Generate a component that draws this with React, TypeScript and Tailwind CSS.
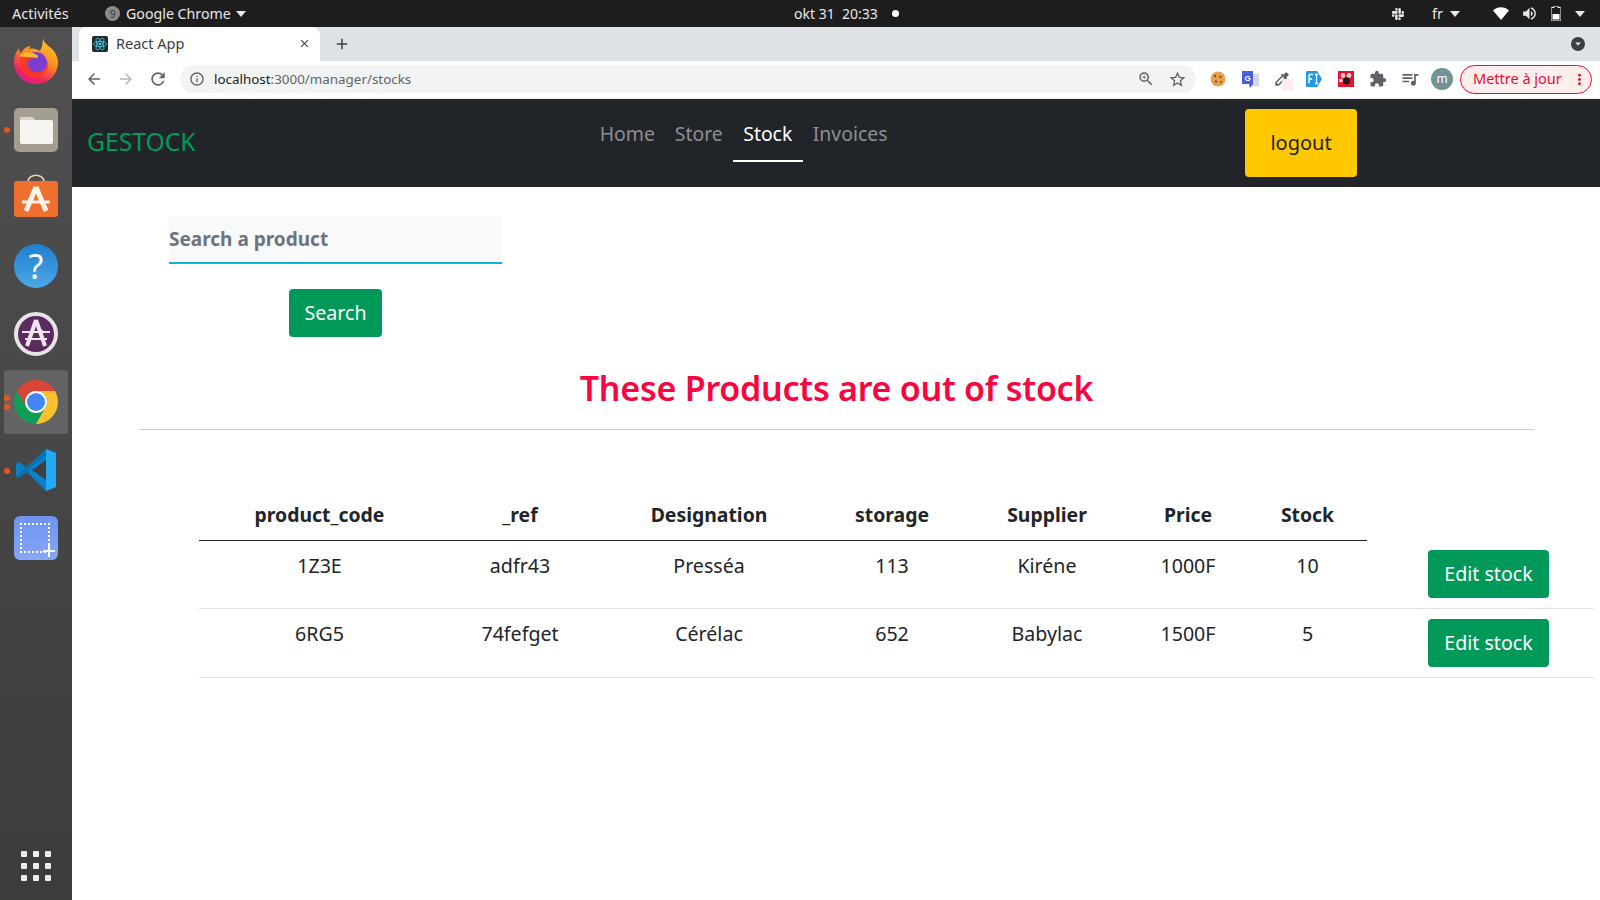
import React from 'react';
import {
  MdArrowBack,
  MdArrowForward,
  MdRefresh,
  MdInfoOutline,
  MdZoomIn,
  MdStarBorder,
  MdExtension,
  MdQueueMusic,
  MdAdd,
  MdClose,
  MdMoreVert,
  MdVolumeUp,
  MdColorize,
} from 'react-icons/md';
import { FaSlack } from 'react-icons/fa';

const products = [
  { code: '1Z3E', ref: 'adfr43', designation: 'Presséa', storage: '113', supplier: 'Kiréne', price: '1000F', stock: '10' },
  { code: '6RG5', ref: '74fefget', designation: 'Cérélac', storage: '652', supplier: 'Babylac', price: '1500F', stock: '5' },
];

const Caret = ({ className = '' }: { className?: string }) => (
  <svg viewBox="0 0 10 6" className={`h-[6px] w-[10px] ${className}`}>
    <path d="M0 0h10L5 6z" fill="currentColor" />
  </svg>
);

const Firefox = () => (
  <svg viewBox="0 0 46 48" className="mb-[3px] h-[48px] w-[46px]">
    <defs>
      <linearGradient id="ffBody" x1="0.8" y1="0" x2="0.3" y2="1">
        <stop offset="0" stopColor="#ffcf2e" />
        <stop offset="0.45" stopColor="#ff8a1f" />
        <stop offset="0.8" stopColor="#f0265e" />
        <stop offset="1" stopColor="#d81b8c" />
      </linearGradient>
    </defs>
    <path d="M30 1c1 6 5 7 9 11 3 3 6 8 6 13 0 13-10 22-22 22S1 38 1 25c0-6 2-10 5-14 0 3 1 4 2 5 2-4 6-7 10-7-1 1-2 2-2 3 3-1 8 0 11 2 2-4 3-8 3-13z" fill="url(#ffBody)" />
    <circle cx="23" cy="26" r="11" fill="#7b3fd0" />
    <path d="M7 20c5-3 12-3 16 1-4 0-7 1-8 4-1 5 3 10 9 10 7 0 11-5 10-12 3 7-1 18-12 18C12 41 5 31 7 20z" fill="#f8391f" opacity="0.85" />
    <path d="M6 19c4-4 10-5 16-2 3 1 4 3 2 4-5-1-11 0-18-2z" fill="#ffb62e" />
  </svg>
);

const Files = () => (
  <div className="flex h-[44px] w-[44px] items-center justify-center rounded-[5px] bg-[#a39e8f]">
    <svg viewBox="0 0 33 27" className="h-[27px] w-[33px]">
      <path d="M2 0h10l3 3h16a2 2 0 0 1 2 2v20a2 2 0 0 1-2 2H2a2 2 0 0 1-2-2V2a2 2 0 0 1 2-2z" fill="#f6f4f1" />
      <path d="M0 2a2 2 0 0 1 2-2h10l3 3H0z" fill="#d9d5cd" />
    </svg>
  </div>
);

const Software = () => (
  <svg viewBox="0 0 44 46" className="mb-[4px] h-[46px] w-[44px]">
    <path d="M14 9C14 0 30 0 30 9" fill="none" stroke="#edd5ab" strokeWidth="1.6" />
    <rect x="0" y="8" width="44" height="36" rx="3" fill="#ef6f2e" />
    <path d="M22 14L12 38M22 14l10 24" stroke="#fff3e8" strokeWidth="5" fill="none" />
    <path d="M8 29h28" stroke="#fff3e8" strokeWidth="3" />
  </svg>
);

const Help = () => (
  <div className="flex h-[44px] w-[44px] items-center justify-center rounded-full bg-linear-to-b from-[#1f7fd0] to-[#4aa8e6] text-[34px] leading-none text-white">
    ?
  </div>
);

const Updater = () => (
  <svg viewBox="0 0 44 44" className="h-[44px] w-[44px]">
    <circle cx="22" cy="22" r="20" fill="#5b2a5e" stroke="#e8e4e6" strokeWidth="4" />
    <path d="M22 8L13 34M22 8l9 26" stroke="#efe6ee" strokeWidth="4" fill="none" />
    <path d="M8 20h28M11 27h22" stroke="#efe6ee" strokeWidth="2" />
    <circle cx="27" cy="20" r="2.5" fill="#efe6ee" />
  </svg>
);

const Chrome = () => (
  <svg viewBox="0 0 44 44" className="h-[44px] w-[44px]">
    <path d="M22 11H41A22 22 0 0 0 3 11L12.5 27.5A11 11 0 0 1 22 11z" fill="#db4437" />
    <path d="M12.5 27.5L3 11A22 22 0 0 0 22 44L31.5 27.5A11 11 0 0 1 12.5 27.5z" fill="#0f9d58" />
    <path d="M31.5 27.5L22 44A22 22 0 0 0 41 11H22A11 11 0 0 1 31.5 27.5z" fill="#fbc02d" />
    <circle cx="22" cy="22" r="11" fill="#fff" />
    <circle cx="22" cy="22" r="9" fill="#4285f4" />
  </svg>
);

const VsCode = () => (
  <svg viewBox="0 0 42 44" className="h-[44px] w-[42px]">
    <path d="M31 1L12 20 4 14 1 16v12l3 2 8-6 19 19 10-4V5z" fill="#0a80cc" />
    <path d="M31 1l10 4v34l-10 4z" fill="#23a9f2" />
    <path d="M31 12v20L17 22z" fill="#3f3f3f" />
    <path d="M1 28l3 2 27-23V1z" fill="#0b6fb3" />
  </svg>
);

const Screenshot = () => (
  <div className="relative flex h-[44px] w-[44px] items-center justify-center rounded-[6px] bg-linear-to-b from-[#6f93ee] to-[#86a6f7]">
    <div className="mr-[2px] h-[30px] w-[30px] border-[2px] border-dotted border-white" />
    <svg viewBox="0 0 12 12" className="absolute right-[3px] bottom-[3px] h-[12px] w-[12px]">
      <path d="M5 0h2v5h5v2H7v5H5V7H0V5h5z" fill="#fff" />
    </svg>
  </div>
);

const ReactFavicon = () => (
  <svg viewBox="0 0 16 16" className="h-[16px] w-[16px] rounded-[2px] bg-[#1f2a30]">
    <g fill="none" stroke="#4fc9dc" strokeWidth="0.8">
      <ellipse cx="8" cy="8" rx="6.5" ry="2.6" />
      <ellipse cx="8" cy="8" rx="6.5" ry="2.6" transform="rotate(60 8 8)" />
      <ellipse cx="8" cy="8" rx="6.5" ry="2.6" transform="rotate(120 8 8)" />
    </g>
    <circle cx="8" cy="8" r="1.4" fill="#4fc9dc" />
  </svg>
);

const DockDot = ({ className }: { className: string }) => (
  <span className={`absolute left-[4px] h-[6px] w-[6px] rounded-full bg-[#e95420] ${className}`} />
);

const dockItem = 'relative flex h-[68px] w-full shrink-0 items-center justify-center';

const Dock = () => (
  <aside className="flex w-[72px] shrink-0 flex-col items-center bg-linear-to-b from-[#505050] to-[#3c3c3c] pt-[1px] pb-[19px]">
    <div className={dockItem}><Firefox /></div>
    <div className={dockItem}>
      <DockDot className="top-[31px]" />
      <Files />
    </div>
    <div className={dockItem}><Software /></div>
    <div className={dockItem}><Help /></div>
    <div className={dockItem}><Updater /></div>
    <div className={dockItem}>
      <div className="absolute inset-x-[4px] inset-y-[2px] rounded-[3px] bg-[#636363]" />
      <DockDot className="top-[27px]" />
      <DockDot className="top-[36px]" />
      <div className="relative"><Chrome /></div>
    </div>
    <div className={dockItem}>
      <DockDot className="top-[32px]" />
      <VsCode />
    </div>
    <div className={dockItem}><Screenshot /></div>
    <div className="mt-auto grid grid-cols-3 gap-[6px]">
      {Array.from({ length: 9 }).map((_, i) => (
        <span key={i} className="h-[6px] w-[6px] rounded-[1px] bg-[#eeeeee]" />
      ))}
    </div>
  </aside>
);

const TopBar = () => (
  <header className="relative flex h-[27px] shrink-0 items-center bg-[#1d1d1d] text-[14.5px] text-[#e8e8e8]">
    <span className="ml-[12px] w-[58px]">Activités</span>
    <span className="ml-[35px] flex h-[15px] w-[15px] items-center justify-center rounded-full bg-[#8a8a8a] text-[10px] leading-none text-[#333]">9</span>
    <span className="ml-[6px] text-[14.2px]">Google Chrome</span>
    <Caret className="ml-[5px]" />
    <div className="absolute left-[794px] flex items-center text-[14px]">
      <span>okt 31&nbsp;&nbsp;20:33</span>
      <span className="ml-[14px] h-[7px] w-[7px] rounded-full bg-white" />
    </div>
    <div className="ml-auto flex items-center pr-[15px]">
      <FaSlack className="mr-[27px] h-[14px] w-[14px]" />
      <span className="mr-[7px]">fr</span>
      <Caret className="mr-[33px]" />
      <svg viewBox="0 0 16 13" className="mr-[12px] h-[13px] w-[16px]">
        <path d="M0 3.5C4-1 12-1 16 3.5L8 13z" fill="#fff" />
      </svg>
      <MdVolumeUp className="mr-[13px] h-[17px] w-[17px]" />
      <svg viewBox="0 0 10 15" className="mr-[14px] h-[15px] w-[10px]">
        <path d="M3 0h4v1.5h2a1 1 0 0 1 1 1V14a1 1 0 0 1-1 1H1a1 1 0 0 1-1-1V2.5a1 1 0 0 1 1-1h2z" fill="none" stroke="#fff" strokeWidth="1" />
        <rect x="1.5" y="8" width="7" height="5.5" fill="#fff" />
      </svg>
      <Caret />
    </div>
  </header>
);

const extensionIcons = [
  <svg viewBox="0 0 16 16" className="h-[16px] w-[16px]">
    <circle cx="8" cy="8" r="7.5" fill="#e9a24c" />
    <circle cx="5" cy="5" r="1.2" fill="#8a4a1c" />
    <circle cx="10.5" cy="6" r="1.2" fill="#8a4a1c" />
    <circle cx="6" cy="10.5" r="1.2" fill="#8a4a1c" />
    <circle cx="11" cy="11" r="1" fill="#8a4a1c" />
  </svg>,
  <svg viewBox="0 0 17 17" className="h-[17px] w-[17px]">
    <rect x="7" y="3" width="10" height="12" fill="#d5d8dc" />
    <path d="M0 0h11v13l-3 4-1-4H0z" fill="#4a5fe0" />
    <text x="2.5" y="9.5" fontSize="8" fontWeight="700" fill="#fff" fontFamily="Liberation Sans, sans-serif">G</text>
  </svg>,
  <div className="relative flex h-[18px] w-[18px] items-center justify-center">
    <MdColorize className="h-[18px] w-[18px] text-[#5f6368]" />
    <span className="absolute right-[-3px] bottom-[-3px] h-[12px] w-[12px] rounded-[2px] bg-[#fdeef2]" />
  </div>,
  <svg viewBox="0 0 16 16" className="h-[16px] w-[16px]">
    <path d="M1 0h10l5 8-5 8H1a1 1 0 0 1-1-1V1a1 1 0 0 1 1-1z" fill="#1f9be6" />
    <path d="M3 3.5h4M3 3.5v9M3 8h3M9 3.5h3M10.5 3.5v9M9 12.5h3" stroke="#fff" strokeWidth="1.3" fill="none" />
  </svg>,
  <svg viewBox="0 0 16 16" className="h-[16px] w-[16px]">
    <rect width="16" height="16" fill="#e3122f" />
    <circle cx="5" cy="4.5" r="2.4" fill="#f7c9cf" />
    <circle cx="11" cy="4.5" r="2.4" fill="#f7c9cf" />
    <circle cx="3" cy="9.5" r="2" fill="#f7c9cf" />
    <circle cx="8.5" cy="10" r="3.4" fill="#26181a" />
  </svg>,
  <MdExtension className="h-[18px] w-[18px] text-[#5f6368]" />,
  <MdQueueMusic className="h-[20px] w-[20px] text-[#5f6368]" />,
];

const Browser = () => (
  <>
    <div className="flex h-[34px] shrink-0 items-end bg-[#dee1e6]">
      <div className="ml-[7px] flex h-[34px] w-[241px] items-center rounded-t-[8px] bg-white pr-[9px] pb-[1px] pl-[13px]">
        <ReactFavicon />
        <span className="ml-[8px] text-[14.5px] text-[#3c4043]">React App</span>
        <MdClose className="ml-auto h-[13px] w-[13px] text-[#3c4043]" />
      </div>
      <MdAdd className="mb-[8px] ml-[13px] h-[18px] w-[18px] text-[#3c4043]" />
      <div className="mr-[15px] mb-[10px] ml-auto flex h-[14px] w-[14px] items-center justify-center rounded-full bg-[#3c4043] text-[#dee1e6]">
        <Caret className="scale-60" />
      </div>
    </div>
    <div className="flex h-[37px] shrink-0 items-center bg-white pb-[1px]">
      <MdArrowBack className="ml-[13px] h-[18px] w-[18px] text-[#5f6368]" />
      <MdArrowForward className="ml-[14px] h-[18px] w-[18px] text-[#b4b7bb]" />
      <MdRefresh className="ml-[13px] h-[20px] w-[20px] text-[#5f6368]" />
      <div className="ml-[12px] flex h-[28px] w-[1016px] items-center rounded-full bg-[#f1f3f4] pr-[9px] pl-[9px]">
        <MdInfoOutline className="h-[16px] w-[16px] text-[#5f6368]" />
        <span className="ml-[9px] text-[13.4px] text-[#202124]">
          localhost<span className="text-[#5f6368]">:3000/manager/stocks</span>
        </span>
        <MdZoomIn className="ml-auto h-[18px] w-[18px] text-[#5f6368]" />
        <MdStarBorder className="ml-[13px] h-[19px] w-[19px] text-[#5f6368]" />
      </div>
      <div className="ml-[6px] flex items-center">
        {extensionIcons.map((icon, i) => (
          <div key={i} className="flex w-[32px] items-center justify-center">{icon}</div>
        ))}
      </div>
      <span className="ml-[5px] flex h-[22px] w-[22px] items-center justify-center rounded-full bg-[#739199] text-[12px] leading-none text-white">m</span>
      <div className="ml-[7px] flex h-[29px] w-[132px] items-center rounded-full border border-[#e3102f] bg-[#fdeeee] pl-[12px] text-[14.5px] text-[#e3102f]">
        Mettre à jour
        <MdMoreVert className="ml-auto mr-[3px] h-[17px] w-[17px]" />
      </div>
    </div>
    <div className="h-[1px] shrink-0 bg-[#eeeeee]" />
  </>
);

const navLinks = ['Home', 'Store', 'Stock', 'Invoices'];

const Navbar = () => (
  <nav className="relative flex h-[88px] shrink-0 items-start bg-[#212529]">
    <a className="mt-[25px] ml-[15px] text-[24.7px] leading-[36px] text-[#009959]">GESTOCK</a>
    <ul className="ml-[394px] flex">
      {navLinks.map((link) => (
        <li
          key={link}
          className={
            link === 'Stock'
              ? 'mt-[16px] flex h-[47px] w-[70px] items-start justify-center border-b-2 border-white pt-[4px] text-[19.4px] leading-[30px] text-white'
              : 'mt-[16px] flex h-[47px] items-start px-[10px] pt-[4px] text-[19.4px] leading-[30px] text-[#8c8f92]'
          }
        >
          {link}
        </li>
      ))}
    </ul>
    <button className="absolute top-[10px] left-[1173px] h-[68px] w-[112px] rounded-[4px] bg-[#ffc800] text-[20px] text-[#212529]">
      logout
    </button>
  </nav>
);

const headers = ['product_code', '_ref', 'Designation', 'storage', 'Supplier', 'Price', 'Stock'];
const cellClass = 'p-[8px] pt-[10px] align-top text-center text-[19.6px] leading-[30px] font-normal text-[#212529]';

const StockPage = () => (
  <main className="flex min-h-0 flex-1 flex-col bg-white">
    <div className="mt-[30px] ml-[97px] flex w-[333px] flex-col items-center">
      <div className="flex h-[47px] w-full items-center border-b-2 border-[#0bb5dd] bg-[#f8f9fa] pb-[1px] text-[19px] font-bold text-[#6c757d]">
        Search a product
      </div>
      <button className="mt-[25px] h-[48px] w-[93px] rounded-[4px] bg-[#009959] text-[19.6px] text-white">
        Search
      </button>
    </div>

    <div className="mt-[24px] ml-[67px] w-[1395px]">
      <h1 className="text-center text-[34px] leading-[54px] font-semibold tracking-[-0.24px] text-[#f90541]">
        These Products are out of stock
      </h1>
      <hr className="mt-[14px] border-t border-[#cfcfcf]" />
    </div>

    <table className="mt-[64px] ml-[127px] w-[1395px] table-fixed border-collapse">
      <colgroup>
        <col className="w-[241px]" />
        <col className="w-[160px]" />
        <col className="w-[218px]" />
        <col className="w-[148px]" />
        <col className="w-[162px]" />
        <col className="w-[120px]" />
        <col className="w-[119px]" />
        <col />
      </colgroup>
      <thead>
        <tr>
          {headers.map((h) => (
            <th key={h} className="border-b border-[#212529] px-[8px] pt-[6px] pb-[10px] text-center text-[19.4px] leading-[30px] font-bold text-[#212529]">
              {h}
            </th>
          ))}
          <th />
        </tr>
      </thead>
      <tbody>
        {products.map((p, i) => (
          <tr key={p.code} className="border-b border-[#dee2e6]">
            <td className={cellClass}>{p.code}</td>
            <td className={cellClass}>{p.ref}</td>
            <td className={cellClass}>{p.designation}</td>
            <td className={cellClass}>{p.storage}</td>
            <td className={cellClass}>{p.supplier}</td>
            <td className={cellClass}>{p.price}</td>
            <td className={cellClass}>{p.stock}</td>
            <td className={i === 0 ? 'pt-[9px] pb-[10px] pl-[61px] align-top' : 'pt-[10px] pb-[10px] pl-[61px] align-top'}>
              <button className="h-[48px] w-[121px] rounded-[4px] bg-[#009959] text-[19.6px] text-white">
                Edit stock
              </button>
            </td>
          </tr>
        ))}
      </tbody>
    </table>
  </main>
);

export default function App() {
  return (
    <div className="flex h-[900px] w-[1600px] flex-col overflow-hidden font-['Noto_Sans',sans-serif]">
      <TopBar />
      <div className="flex min-h-0 flex-1">
        <Dock />
        <div className="flex min-w-0 flex-1 flex-col">
          <Browser />
          <Navbar />
          <StockPage />
        </div>
      </div>
    </div>
  );
}
